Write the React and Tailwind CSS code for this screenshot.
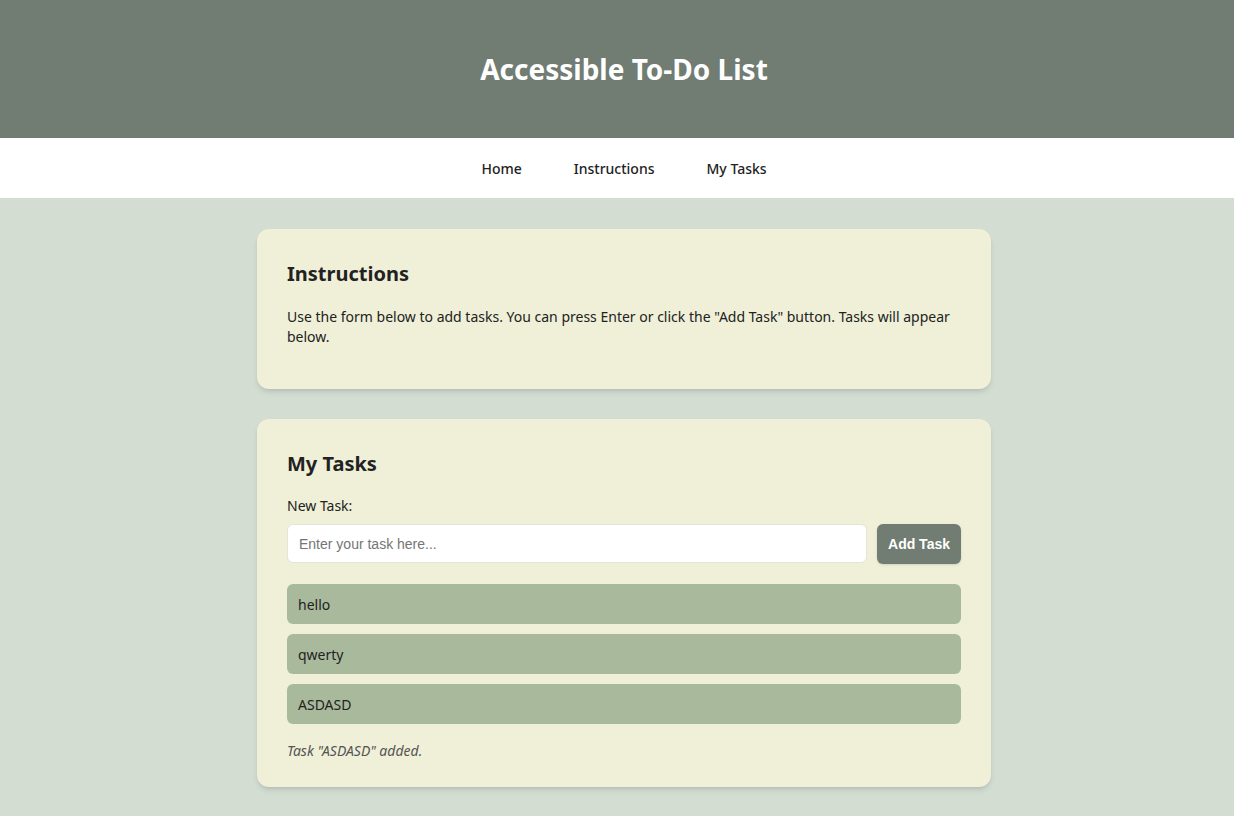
const tasks = ["hello", "qwerty", "ASDASD"];

export default function App() {
  return (
    <div className="min-h-screen overflow-hidden bg-[#d3ddd2]">
      <div className="w-[1248px] text-[#222] font-['Noto_Sans','Open_Sans',sans-serif]">
        <header className="bg-[#717c72] h-[138px] flex items-center justify-center">
          <h1 className="text-[28px] font-bold text-white">Accessible To-Do List</h1>
        </header>

        <nav className="bg-white h-[60px] flex items-center justify-center gap-[52px] text-[14px] font-medium">
          <a href="#">Home</a>
          <a href="#">Instructions</a>
          <a href="#">My Tasks</a>
        </nav>

        <main className="w-[734px] mx-auto pt-[31px] flex flex-col gap-[30px] pb-[30px]">
          <section className="bg-[#eff0d7] rounded-xl shadow-md px-[30px] pt-[30px] pb-[42px]">
            <h2 className="text-[20px] font-bold">Instructions</h2>
            <p className="text-[14px] leading-5 mt-[18px]">
              Use the form below to add tasks. You can press Enter or click the "Add Task" button. Tasks will appear
              below.
            </p>
          </section>

          <section className="bg-[#eff0d7] rounded-xl shadow-md px-[30px] pt-[30px] pb-[26px]">
            <h2 className="text-[20px] font-bold">My Tasks</h2>
            <label className="block text-[14px] mt-[16px]">New Task:</label>
            <div className="flex gap-[10px] mt-[8px]">
              <input
                className="flex-1 h-[39px] bg-white rounded-md border border-[#e4e4d8] px-[11px] text-[14px] font-['Liberation_Sans',sans-serif] placeholder:text-[#757575]"
                placeholder="Enter your task here..."
              />
              <button className="bg-[#717c72] text-white font-bold text-[14px] font-['Liberation_Sans',sans-serif] rounded-md px-[11px] h-[40px] shadow-sm">
                Add Task
              </button>
            </div>
            <ul className="mt-[20px] flex flex-col gap-[10px]">
              {tasks.map((t) => (
                <li key={t} className="bg-[#a9b99b] rounded-md h-[40px] flex items-center px-[11px] text-[14px]">
                  {t}
                </li>
              ))}
            </ul>
            <p className="italic text-[14px] text-[#555] mt-[16px]">Task "ASDASD" added.</p>
          </section>
        </main>
      </div>
    </div>
  );
}
